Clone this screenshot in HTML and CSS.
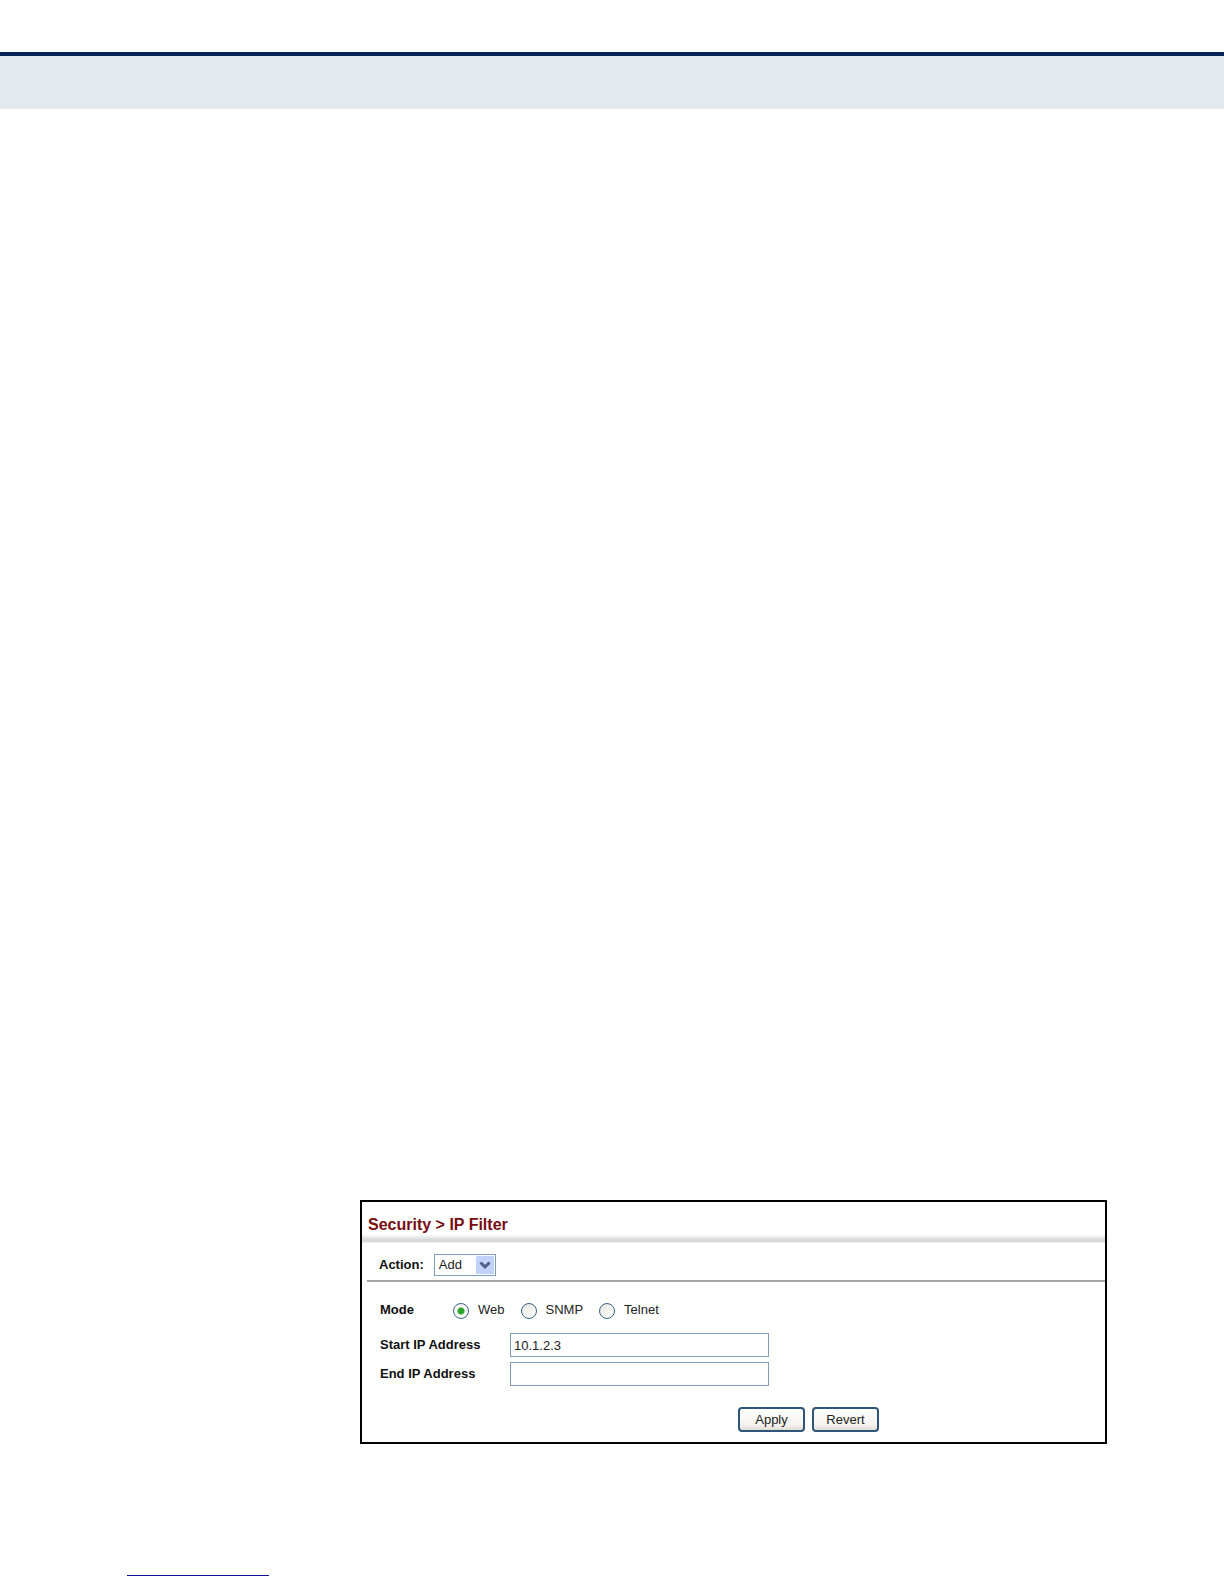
FILE: index.html
```html
<!DOCTYPE html>
<html lang="en">
<head>
    <meta charset="UTF-8">
    <meta name="viewport" content="width=device-width, initial-scale=1.0">
    <title>IP Filter</title>
    <link rel="stylesheet" href="styles.css">
</head>
<body>
    <header class="page-header"></header>

    <main class="content">
        <form class="panel">
            <h1>Security &gt; IP Filter</h1>
            <div class="divider"></div>

            <div class="action-bar">
                <label for="action">Action:</label>
                <div class="select-box">
                    <select id="action">
                        <option>Add</option>
                        <option>Show</option>
                    </select>
                    <svg class="arrow" viewBox="0 0 18 18" aria-hidden="true">
                        <rect width="18" height="18" rx="1" fill="#c3d2fb"/>
                        <path d="M4.5 6.5 L9 11 L13.5 6.5" fill="none" stroke="#4d6185" stroke-width="3"/>
                    </svg>
                </div>
            </div>

            <div class="fields">
                <div class="mode" role="radiogroup" aria-labelledby="modeLabel">
                    <span id="modeLabel" class="mode-label">Mode</span>
                    <label class="option"><input type="radio" name="mode" checked>Web</label>
                    <label class="option"><input type="radio" name="mode">SNMP</label>
                    <label class="option"><input type="radio" name="mode">Telnet</label>
                </div>

                <div class="row">
                    <label for="startIp">Start IP Address</label>
                    <input type="text" id="startIp" value="10.1.2.3">
                </div>
                <div class="row">
                    <label for="endIp">End IP Address</label>
                    <input type="text" id="endIp">
                </div>
            </div>

            <div class="buttons">
                <button type="button">Apply</button>
                <button type="reset">Revert</button>
            </div>
        </form>
    </main>

    <footer class="page-footer">
        <div class="footer-line"></div>
    </footer>
</body>
</html>
```

FILE: styles.css
```css
* {
    box-sizing: border-box;
}
body {
    display: flex;
    flex-direction: column;
    min-height: 100vh;
    margin: 0;
    background: #fff;
    color: #111;
    font-family: "Liberation Sans", Arial, sans-serif;
    font-size: 13px;
    line-height: 16px;
}
.page-header {
    height: 57px;
    margin-top: 52px;
    border-top: 4px solid #0a2356;
    background: #e4e8ef;
}
.content {
    display: flex;
    flex: 1;
    flex-direction: column;
    justify-content: flex-end;
    padding: 0 117px 0 360px;
}
.panel {
    border: 2px solid #000;
}
h1 {
    margin: 0;
    padding: 13px 6px 0;
    color: #780c12;
    font-size: 16px;
    line-height: 20px;
}
.divider {
    height: 8px;
    background: linear-gradient(#fafafa, #d8d8d8 60%, #dadada 80%, #f6f6f6);
}
.action-bar {
    display: flex;
    align-items: center;
    gap: 10px;
    margin-left: 5px;
    padding: 11px 12px 4px;
    border-bottom: 2px solid #a5a5a5;
}
label,
.mode-label {
    font-weight: bold;
}
.select-box {
    position: relative;
    width: 62px;
}
select {
    display: block;
    width: 100%;
    height: 22px;
    padding: 0 4px;
    border: 1px solid #7f9db9;
    border-radius: 0;
    background: #fff;
    color: #222;
    font: inherit;
    appearance: none;
}
.arrow {
    position: absolute;
    top: 2px;
    right: 2px;
    width: 18px;
    height: 18px;
    pointer-events: none;
}
.fields {
    padding: 19px 18px 0;
}
.mode {
    display: flex;
    align-items: center;
    gap: 16px;
    margin-bottom: 14px;
}
.mode-label {
    width: 57px;
}
.option {
    display: flex;
    align-items: center;
    gap: 9px;
    color: #222;
    font-weight: normal;
}
input[type="radio"] {
    width: 16px;
    height: 16px;
    margin: 2px 0 0;
    border: 1px solid #3b6489;
    border-radius: 50%;
    background: linear-gradient(135deg, #e6e6e0, #fff);
    appearance: none;
}
input[type="radio"]:checked {
    background: radial-gradient(circle, #2ba52b 3px, #f7f7f5 4px);
}
.row {
    display: flex;
    align-items: center;
    margin-bottom: 5px;
}
.row label {
    flex: none;
    width: 130px;
}
input[type="text"] {
    width: 259px;
    height: 24px;
    padding: 0 3px;
    border: 1px solid #7f9db9;
    color: #222;
    font: inherit;
}
.buttons {
    display: flex;
    justify-content: center;
    gap: 7px;
    padding: 16px 0 10px 150px;
}
button {
    width: 67px;
    height: 25px;
    padding: 0;
    border: 2px solid #2f5578;
    border-radius: 4px;
    background: linear-gradient(#fff, #f4f3ee 75%, #dfdcd2);
    color: #222;
    font: inherit;
}
.page-footer {
    padding: 131px 127px 8px;
}
.footer-line {
    width: 142px;
    border-bottom: 1px solid #1414a0;
}
```
